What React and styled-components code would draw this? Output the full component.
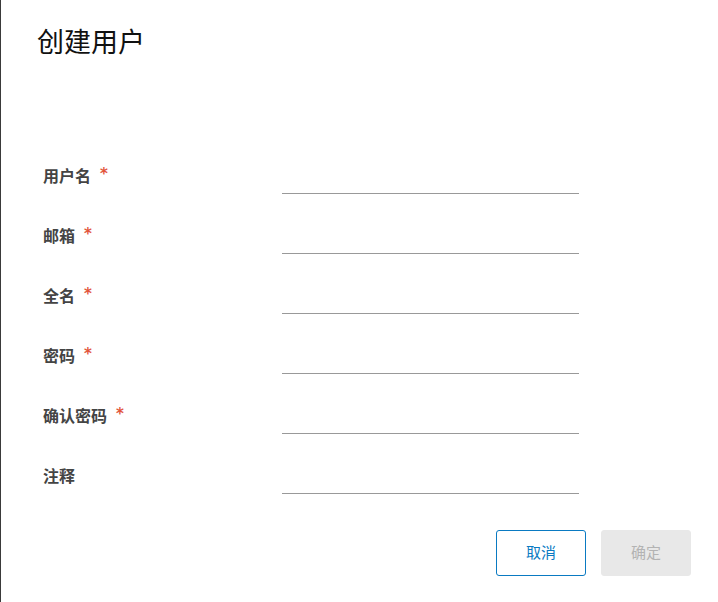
import React from "react";
import styled, { createGlobalStyle } from "styled-components";

const Global = createGlobalStyle`
  html, body { margin: 0; padding: 0; background: #fff; }
  body { font-family: "Noto Sans CJK SC", "Noto Sans", sans-serif; }
  * { box-sizing: border-box; }
`;

const Dialog = styled.div`
  width: 718px;
  height: 602px;
  background: #fff;
  border-left: 1px solid #3a3a3a;
  display: flex;
  flex-direction: column;
`;

const Title = styled.h1`
  margin: 0;
  padding: 22px 0 0 36px;
  height: 134px;
  font-size: 27px;
  line-height: 38px;
  font-weight: 400;
  color: #111;
`;

const Form = styled.div`
  display: flex;
  flex-direction: column;
  padding-left: 42px;
`;

const Row = styled.div`
  height: 60px;
  display: grid;
  grid-template-columns: 239px 297px;
  align-items: end;
`;

const Label = styled.label`
  font-size: 16px;
  line-height: 22px;
  font-weight: 700;
  color: #444;
  margin-bottom: 8px;
  display: flex;
  align-items: flex-start;
`;

const Star = styled.span`
  color: #e2553b;
  font-family: "DejaVu Sans", sans-serif;
  font-size: 15px;
  line-height: 15px;
  margin-left: 9px;
  margin-top: 3px;
  font-weight: 700;
`;

const Input = styled.input`
  height: 32px;
  width: 297px;
  border: none;
  border-bottom: 1px solid #999;
  outline: none;
  background: transparent;
  font-family: inherit;
  font-size: 14px;
  padding: 0;
`;

const Footer = styled.div`
  display: flex;
  justify-content: flex-end;
  gap: 15px;
  padding: 36px 27px 0 0;
`;

const Button = styled.button`
  width: 90px;
  height: 46px;
  border-radius: 3px;
  font-family: inherit;
  font-size: 15px;
  line-height: 20px;
  padding: 0 0 2px;
  cursor: pointer;
  border: 1px solid ${(p) => (p.$primary ? "#e8e8e8" : "#0a7ac2")};
  background: ${(p) => (p.$primary ? "#e8e8e8" : "#fff")};
  color: ${(p) => (p.$primary ? "#b3b3b3" : "#0a7ac2")};
`;

const fields = [
  { label: "用户名", required: true },
  { label: "邮箱", required: true },
  { label: "全名", required: true },
  { label: "密码", required: true },
  { label: "确认密码", required: true },
  { label: "注释", required: false },
];

export default function App() {
  return (
    <>
      <Global />
      <Dialog>
        <Title>创建用户</Title>
        <Form>
          {fields.map((f) => (
            <Row key={f.label}>
              <Label>
                {f.label}
                {f.required && <Star>*</Star>}
              </Label>
              <Input />
            </Row>
          ))}
        </Form>
        <Footer>
          <Button>取消</Button>
          <Button $primary disabled>
            确定
          </Button>
        </Footer>
      </Dialog>
    </>
  );
}
